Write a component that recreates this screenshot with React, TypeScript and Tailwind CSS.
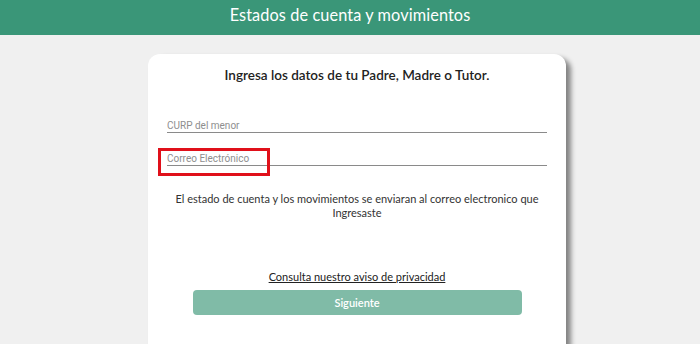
import React from "react";

const UnderlineField: React.FC<{ label: string; highlight?: boolean }> = ({ label, highlight }) => {
  return (
    <div className="relative">
      <input
        placeholder={label}
        className="block w-full h-[22px] bg-transparent border-b border-[#8a8a8a] px-0 pt-[8px] text-[10px] text-[#666] placeholder:text-[#8e8e8e] outline-none font-['Roboto',sans-serif]"
      />
      {highlight && (
        <div className="absolute left-[-9px] top-[4px] w-[112px] h-[28px] border-[3px] border-[#e0101a]"></div>
      )}
    </div>
  );
};

export default function App() {
  return (
    <div className="w-[700px] h-[344px] overflow-hidden bg-[#f0f0f0] font-['Lato',sans-serif]">
      <div className="h-[35px] bg-[#3a9678] flex items-center justify-center">
        <h1 className="text-white text-[16.3px] tracking-[0.1px] pb-[4px]">Estados de cuenta y movimientos</h1>
      </div>
      <div className="flex justify-center pt-[19px]">
        <div className="w-[418px] h-[320px] bg-white rounded-[12px] shadow-[5px_4px_5px_rgba(0,0,0,0.45)] px-[19px] pt-[11px] ml-[14px]">
          <h2 className="text-center text-[13.5px] font-semibold text-[#222]">
            Ingresa los datos de tu Padre, Madre o Tutor.
          </h2>
          <div className="mt-[26px] flex flex-col gap-[11px]">
            <UnderlineField label="CURP del menor" />
            <UnderlineField label="Correo Electrónico" highlight />
          </div>
          <p className="mt-[26px] text-center text-[11px] leading-[14px] text-[#333] px-[4px]">
            El estado de cuenta y los movimientos se enviaran al correo electronico que Ingresaste
          </p>
          <div className="mt-[48px] text-center leading-[14px]">
            <a className="text-[11px] text-[#222] underline">Consulta nuestro aviso de privacidad</a>
          </div>
          <div className="flex justify-center mt-[6px]">
            <button className="w-[329px] h-[25px] rounded-[4px] bg-[#80bba7] text-white text-[11px] font-semibold">
              Siguiente
            </button>
          </div>
        </div>
      </div>
    </div>
  );
}
